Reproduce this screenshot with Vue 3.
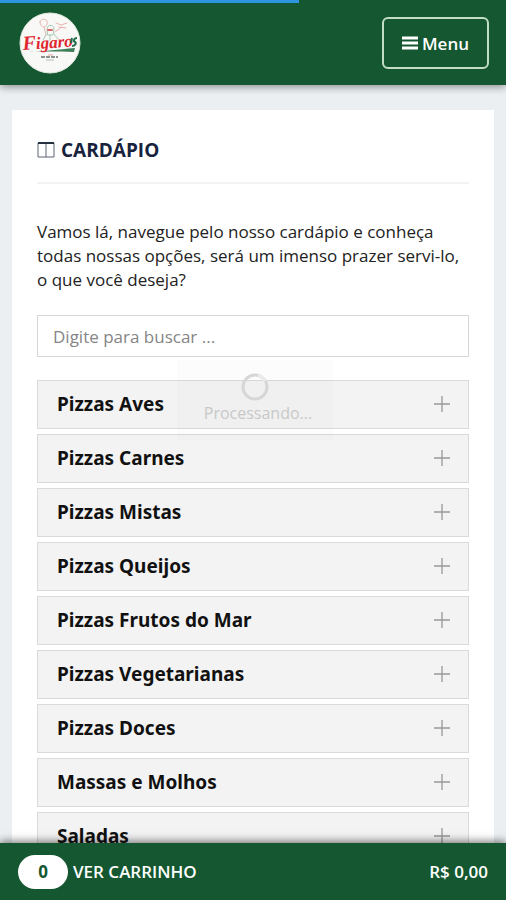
<template>
  <div class="page">
    <div class="progress"></div>

    <header class="topbar">
      <a href="#" class="logo" aria-label="Figaro's">
        <svg viewBox="0 0 62 62" width="62" height="62">
          <circle cx="31" cy="31" r="30" fill="#f8f8f6" stroke="#dfe8df" />
          <g fill="none" stroke-linecap="round">
            <path d="M21 10c0-3 5-4 7-1 1 3-1 6-3 6s-4-2-4-5zM25 15l2 8" stroke="#e5b9b3" />
            <path d="M28 17c0-5 7-5 7 0l-1 6h-5zM27 23l-3 5M35 22l4 5M31 23v5" stroke="#a9c8b5" />
            <path d="M36 20l7-5M37 11l5 2 6-2M40 15l7 1" stroke="#e9b4b1" />
            <path d="M29 18h4" stroke="#d76a6a" stroke-width="2" />
          </g>
          <path d="M10 39c9 1 25-1 46-3l-1 4c-18-1-30 0-45-1z" fill="#3e7d5a" />
          <text x="4" y="38" class="logo-text" transform="rotate(-4 4 38)"><tspan class="logo-initial">F</tspan>igaro</text>
          <path d="M53 26l-1 5M58 26c-3 0-4 3-2 4s0 4-3 4" fill="none" stroke="#22704a" stroke-width="2" />
          <path d="M22 45h17" stroke="#8b918d" stroke-width="2" stroke-dasharray="4 1" />
          <path d="M27 48h8" stroke="#b9bdba" />
          <path d="M29 43h5" stroke="#e3a3a0" />
        </svg>
      </a>
      <button type="button" class="menu-button">
        <svg viewBox="0 0 16 14" width="16" height="14" aria-hidden="true">
          <path d="M0 2h16M0 7h16M0 12h16" stroke="#fff" stroke-width="3" />
        </svg>
        Menu
      </button>
    </header>

    <main class="content">
      <section class="panel">
        <h1 class="title">
          <svg viewBox="0 0 18 16" width="18" height="16" aria-hidden="true">
            <path d="M1 1h16v14H1zM9 2v13" fill="none" stroke="#5c6470" />
            <path d="M1 1h16" stroke="#26313f" stroke-width="2" />
          </svg>
          CARDÁPIO
        </h1>

        <p class="intro">
          Vamos lá, navegue pelo nosso cardápio e conheça todas nossas opções,
          será um imenso prazer servi-lo, o que você deseja?
        </p>

        <input
          v-model="search"
          type="text"
          placeholder="Digite para buscar ..."
          aria-label="Digite para buscar"
          class="search"
        />

        <div class="categories">
          <button
            v-for="category in filtered"
            :key="category"
            type="button"
            class="category"
          >
            {{ category }}
            <svg viewBox="0 0 16 16" width="16" height="16" aria-hidden="true">
              <path d="M8 0v16M0 8h16" stroke="#999" stroke-width="1.3" />
            </svg>
          </button>
        </div>
      </section>
    </main>

    <footer class="cart">
      <button type="button" class="cart-button">
        <span class="cart-count">{{ items }}</span>
        VER CARRINHO
      </button>
      <span class="cart-total">R$ 0,00</span>
    </footer>

    <div class="processing" role="status">
      <svg viewBox="0 0 28 28" width="28" height="28" aria-hidden="true">
        <circle cx="14" cy="14" r="12" fill="none" stroke="#d6d6d6" stroke-width="3" />
        <path d="M17 2a12 12 0 0 1 7 6" fill="none" stroke="#ebebeb" stroke-width="3" />
      </svg>
      <span class="processing-label">Processando...</span>
    </div>
  </div>
</template>

<script setup>
import { computed, ref } from "vue";

const search = ref("");
const items = ref(0);

const categories = [
  "Pizzas Aves",
  "Pizzas Carnes",
  "Pizzas Mistas",
  "Pizzas Queijos",
  "Pizzas Frutos do Mar",
  "Pizzas Vegetarianas",
  "Pizzas Doces",
  "Massas e Molhos",
  "Saladas",
];

const filtered = computed(() =>
  categories.filter((c) => c.toLowerCase().includes(search.value.toLowerCase()))
);
</script>

<style>
body {
  margin: 0;
  background-color: #ebeff2;
}
</style>

<style scoped>
.page {
  display: flex;
  flex-direction: column;
  height: 100vh;
  overflow: hidden;
  position: relative;
  font-family: "Open Sans", "Noto Sans", sans-serif;
  font-size: 17px;
  color: #222;
}

button,
input {
  font-family: inherit;
  box-sizing: border-box;
}

button {
  cursor: pointer;
}

.progress {
  position: absolute;
  top: 0;
  left: 0;
  z-index: 3;
  width: 59%;
  height: 3px;
  background-color: #2d95df;
}

.topbar {
  display: flex;
  justify-content: space-between;
  align-items: center;
  flex: none;
  z-index: 2;
  padding: 12px 17px 11px 19px;
  background-color: #145730;
  box-shadow: 0 2px 8px rgba(0, 0, 0, 0.4);
}

.logo,
.logo svg {
  display: block;
}

.logo-text {
  font-family: "Liberation Serif", serif;
  font-size: 17px;
  font-style: italic;
  font-weight: bold;
  fill: #df2630;
}

.logo-initial {
  font-size: 20px;
}

.menu-button {
  display: flex;
  align-items: center;
  gap: 4px;
  height: 52px;
  padding: 0 18px;
  border: 2px solid #c3dcc5;
  border-radius: 6px;
  background-color: transparent;
  color: #fff;
  font-size: 17px;
  font-weight: 600;
}

.content {
  flex: 1;
  min-height: 0;
  overflow-y: auto;
  scrollbar-width: none;
  padding: 25px 12px 0;
}

.panel {
  padding: 25px;
  background-color: #fff;
}

.title {
  display: flex;
  align-items: center;
  gap: 6px;
  margin: 0 0 36px;
  padding-bottom: 17px;
  border-bottom: 2px solid #f3f3f3;
  color: #17233c;
  font-size: 19px;
  line-height: 30px;
  font-weight: bold;
}

.intro {
  margin: 0 0 23px;
  font-size: 17px;
  line-height: 24px;
}

.search {
  display: block;
  width: 100%;
  height: 42px;
  margin-bottom: 23px;
  padding: 0 15px;
  border: 1px solid #d3d7db;
  background-color: #fff;
  color: #222;
  font-size: 17px;
}

.search::placeholder {
  color: #858585;
}

.categories {
  display: flex;
  flex-direction: column;
  gap: 5px;
}

.category {
  display: flex;
  justify-content: space-between;
  align-items: center;
  height: 49px;
  padding: 0 18px 2px 19px;
  border: 1px solid #dadada;
  background-color: #f3f3f3;
  color: #111;
  font-family: "Noto Sans", sans-serif;
  font-size: 19px;
  font-weight: bold;
  text-align: left;
}

.cart {
  display: flex;
  justify-content: space-between;
  align-items: center;
  flex: none;
  z-index: 2;
  height: 57px;
  padding: 0 18px;
  background-color: #145730;
  box-shadow: 0 -2px 8px rgba(0, 0, 0, 0.5);
  color: #fff;
  font-weight: 600;
}

.cart-button {
  display: flex;
  align-items: center;
  gap: 5px;
  padding: 0;
  border: none;
  background: none;
  color: #fff;
  font-size: 17px;
  font-weight: 600;
}

.cart-count {
  width: 50px;
  border-radius: 17px;
  background-color: #fff;
  color: #145730;
  line-height: 34px;
  font-weight: bold;
}

.processing {
  position: absolute;
  top: 360px;
  left: 50%;
  z-index: 1;
  display: flex;
  flex-direction: column;
  align-items: center;
  box-sizing: border-box;
  width: 156px;
  height: 80px;
  margin-left: -76px;
  padding-top: 13px;
  background-color: rgba(0, 0, 0, 0.01);
  color: #c8c8c8;
  font-size: 16px;
  line-height: 24px;
}

.processing-label {
  padding-left: 6px;
}
</style>
